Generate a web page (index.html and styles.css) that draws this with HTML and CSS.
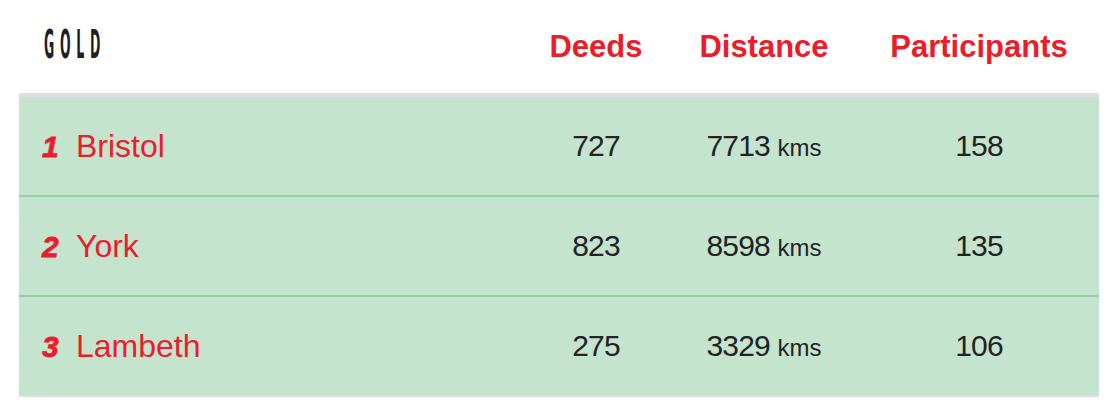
FILE: index.html
```html
<!DOCTYPE html>
<html lang="en">
<head>
<meta charset="utf-8">
<title>Gold leaderboard</title>
<link rel="stylesheet" href="styles.css">
</head>
<body>
<div class="board">
  <div class="grid head">
    <div class="title"><span class="gold">GOLD</span></div>
    <div class="col-h">Deeds</div>
    <div class="col-h">Distance</div>
    <div class="col-h">Participants</div>
  </div>
  <div class="rows">
    <div class="grid row">
      <div class="name"><span class="rank">1</span><span class="city">Bristol</span></div>
      <div class="num">727</div>
      <div class="num">7713 <span class="unit">kms</span></div>
      <div class="num">158</div>
    </div>
    <div class="grid row">
      <div class="name"><span class="rank">2</span><span class="city">York</span></div>
      <div class="num">823</div>
      <div class="num">8598 <span class="unit">kms</span></div>
      <div class="num">135</div>
    </div>
    <div class="grid row">
      <div class="name"><span class="rank">3</span><span class="city">Lambeth</span></div>
      <div class="num">275</div>
      <div class="num">3329 <span class="unit">kms</span></div>
      <div class="num">106</div>
    </div>
  </div>
</div>
</body>
</html>
```

FILE: styles.css
```css
html, body {
  margin: 0;
  padding: 0;
  background: #ffffff;
}

body {
  font-family: "Liberation Sans", Arial, sans-serif;
  color: #222326;
}

.board {
  width: 1080px;
  margin-left: 19px;
}

.grid {
  display: grid;
  grid-template-columns: 1fr 136px 200px 230px;
  align-items: center;
  padding: 0 5px 0 23px;
}

.head {
  height: 93px;
}

.title {
  height: 40px;
  display: flex;
  align-items: center;
}

.gold {
  display: inline-block;
  font-family: "DejaVu Sans", sans-serif;
  font-weight: 700;
  font-size: 39px;
  letter-spacing: 18px;
  color: #1f2024;
  transform: scaleX(0.32);
  transform-origin: left center;
  margin-left: 2px;
  margin-top: -4px;
}

.col-h {
  text-align: center;
  font-weight: 700;
  font-size: 31px;
  color: #ec1c2b;
}

.rows {
  background: #c5e4cd;
  border-top: 4px solid #dcdfe3;
  border-bottom: 2px solid #dcdfe3;
}

.row {
  height: 98px;
}

.row + .row {
  border-top: 2px solid #93cfa0;
}

.name {
  display: flex;
  align-items: baseline;
  color: #ec1c2b;
}

.rank {
  width: 34px;
  font-weight: 700;
  font-style: italic;
  font-size: 30px;
  -webkit-text-stroke: 0.8px #ec1c2b;
}

.city {
  font-size: 32px;
}

.num {
  text-align: center;
  font-size: 30px;
  letter-spacing: -0.8px;
  color: #222326;
}

.unit {
  font-size: 24px;
  letter-spacing: 0;
}
```
